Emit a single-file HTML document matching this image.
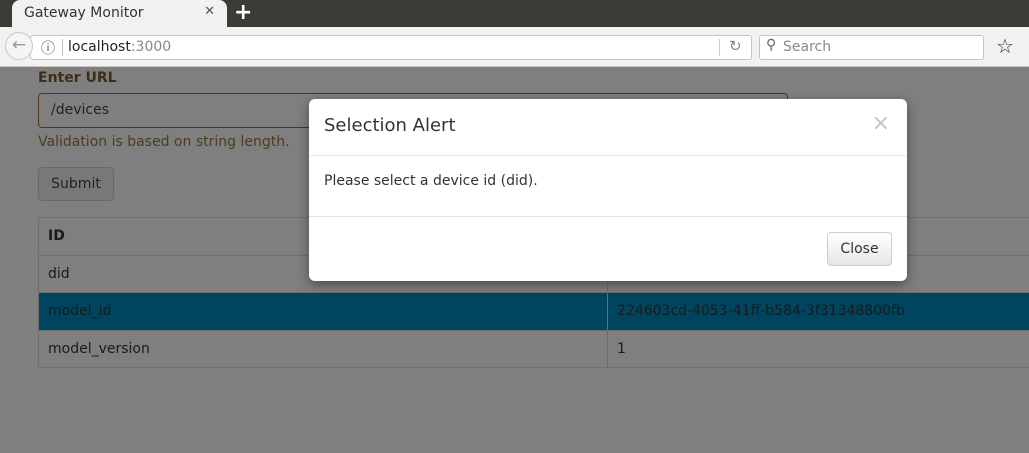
<!DOCTYPE html><html><head><style>
*{box-sizing:border-box;margin:0;padding:0}
body{width:1029px;height:453px;overflow:hidden;font-family:"DejaVu Sans","Liberation Sans",sans-serif;font-size:14px;background:#7f7f7f;position:relative;color:#1a1a1a}
.tabbar{position:absolute;left:0;top:0;width:1029px;height:27px;background:#3c3b37}
.tab{position:absolute;left:12px;top:0;width:215px;height:27px;background:#f2f1f0;border-radius:8px 8px 0 0;font-size:14px;color:#333;padding:5px 0 0 12px}
.tab .x{position:absolute;right:12px;top:4px;color:#555;font-size:13px}
.plus{position:absolute;left:234px;top:0;color:#fff;font-size:22px;font-weight:bold}
.nav{position:absolute;left:0;top:27px;width:1029px;height:40px;background:#f2f1f0;border-bottom:1px solid #c8c6c2}
.url{position:absolute;left:30px;top:8px;width:722px;height:25px;background:#fff;border:1px solid #c8c6c2;border-radius:3px}
.back{position:absolute;left:5px;top:5px;width:28px;height:28px;border-radius:50%;background:#f6f5f4;border:1px solid #c8c6c2;color:#999;text-align:center;font-size:17px;line-height:25px}
.search{position:absolute;left:759px;top:8px;width:225px;height:25px;background:#fff;border:1px solid #c8c6c2;border-radius:3px;color:#888;font-size:14px;padding:3px 0 0 23px}
.page{position:absolute;left:0;top:68px;width:1029px;height:385px}
.lbl{position:absolute;left:38px;top:2px;font-weight:bold;color:#3d2e14;font-size:14px}
.inp{position:absolute;left:38px;top:25px;width:750px;height:35px;border:1px solid #4a3a1a;border-radius:4px;padding:8px 12px;color:#222}
.help{position:absolute;left:38px;top:66px;color:#4d3c1e}
.btn{position:absolute;left:38px;top:99px;width:76px;height:34px;background:#787878;border:1px solid #6a6a6a;border-radius:4px;text-align:center;line-height:32px;color:#222}
table{position:absolute;left:38px;top:149px;width:1000px;border-collapse:collapse}
td{border:1px solid #6e6e6e;height:37.5px;padding:0 9px;vertical-align:middle}
td:first-child{width:569px}
.modal{position:absolute;left:309px;top:99px;width:598px;height:182px;background:#fff;border-radius:6px;box-shadow:0 4px 12px rgba(0,0,0,.4)}
.mh{height:57px;border-bottom:1px solid #e5e5e5;padding:16px 15px;font-size:18px;color:#333}
.mx{position:absolute;right:17px;top:12px;font-size:22px;color:#c4c4c4}
.mb{height:61px;border-bottom:1px solid #e5e5e5;padding:17px 15px;color:#333;font-size:14px}
.close{position:absolute;right:15px;top:133px;width:65px;height:34px;border:1px solid #ccc;border-radius:4px;background:linear-gradient(#fff,#e6e6e6);text-align:center;line-height:32px;color:#333}
</style></head><body>
<div class="tabbar"><div class="tab">Gateway Monitor<span class="x">✕</span></div><div class="plus">+</div></div>
<div class="nav"><div class="url"><span style="position:absolute;left:10px;top:2px;color:#555;font-size:14px">ⓘ</span><span style="position:absolute;left:31px;top:3px;width:1px;height:17px;background:#bbb"></span><span style="position:absolute;left:37px;top:3px;font-size:14px;color:#222">localhost<span style="color:#888">:3000</span></span><span style="position:absolute;left:688px;top:3px;width:1px;height:17px;background:#ccc"></span><span style="position:absolute;left:698px;top:1px;color:#789;font-size:15px">↻</span></div>
<div class="back">←</div>
<div class="search"><span style="position:absolute;left:6px;top:1px;color:#666">⚲</span>Search</div>
<span style="position:absolute;left:996px;top:7px;font-size:20px;color:#333">☆</span></div>
<div class="page">
<div class="lbl">Enter URL</div>
<div class="inp">/devices</div>
<div class="help">Validation is based on string length.</div>
<div class="btn">Submit</div>
<table><tr><td style="font-weight:bold">ID</td><td></td></tr><tr><td>did</td><td></td></tr><tr><td style="background:#004560">model_id</td><td style="background:#004560">224603cd-4053-41ff-b584-3f31348800fb</td></tr><tr><td>model_version</td><td>1</td></tr></table>
</div>
<div class="modal"><div class="mh">Selection Alert</div><div class="mx">×</div><div class="mb">Please select a device id (did).</div><div class="close">Close</div></div>
</body></html>
